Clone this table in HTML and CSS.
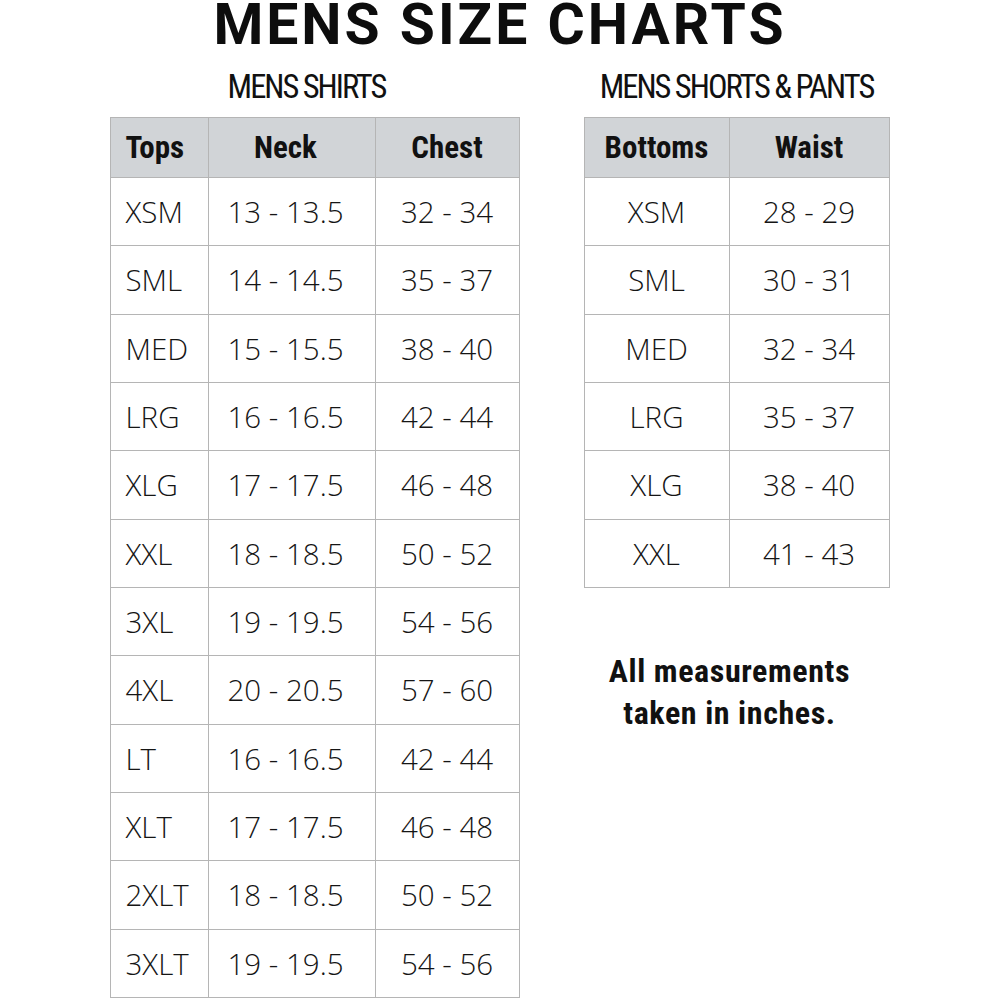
FILE: index.html
```html
<!DOCTYPE html>
<html>
<head>
<meta charset="utf-8">
<link rel="stylesheet" href="styles.css">
</head>
<body>
<div class="page">
  <h1 class="title">MENS SIZE CHARTS</h1>
  <div class="charts">
    <section class="chart chart-shirts">
      <h2 class="subtitle">MENS SHIRTS</h2>
      <table class="size-table shirts">
        <colgroup><col class="w-tops"><col class="w-neck"><col class="w-chest"></colgroup>
        <thead>
          <tr><th class="c-left">Tops</th><th class="c-neck">Neck</th><th>Chest</th></tr>
        </thead>
        <tbody>
          <tr><td class="c-left">XSM</td><td class="c-neck">13 - 13.5</td><td>32 - 34</td></tr>
          <tr><td class="c-left">SML</td><td class="c-neck">14 - 14.5</td><td>35 - 37</td></tr>
          <tr><td class="c-left">MED</td><td class="c-neck">15 - 15.5</td><td>38 - 40</td></tr>
          <tr><td class="c-left">LRG</td><td class="c-neck">16 - 16.5</td><td>42 - 44</td></tr>
          <tr><td class="c-left">XLG</td><td class="c-neck">17 - 17.5</td><td>46 - 48</td></tr>
          <tr><td class="c-left">XXL</td><td class="c-neck">18 - 18.5</td><td>50 - 52</td></tr>
          <tr><td class="c-left">3XL</td><td class="c-neck">19 - 19.5</td><td>54 - 56</td></tr>
          <tr><td class="c-left">4XL</td><td class="c-neck">20 - 20.5</td><td>57 - 60</td></tr>
          <tr><td class="c-left">LT</td><td class="c-neck">16 - 16.5</td><td>42 - 44</td></tr>
          <tr><td class="c-left">XLT</td><td class="c-neck">17 - 17.5</td><td>46 - 48</td></tr>
          <tr><td class="c-left">2XLT</td><td class="c-neck">18 - 18.5</td><td>50 - 52</td></tr>
          <tr><td class="c-left">3XLT</td><td class="c-neck">19 - 19.5</td><td>54 - 56</td></tr>
        </tbody>
      </table>
    </section>
    <section class="chart chart-bottoms">
      <h2 class="subtitle">MENS SHORTS &amp; PANTS</h2>
      <table class="size-table bottoms">
        <colgroup><col class="w-bottoms"><col class="w-waist"></colgroup>
        <thead>
          <tr><th>Bottoms</th><th>Waist</th></tr>
        </thead>
        <tbody>
          <tr><td>XSM</td><td>28 - 29</td></tr>
          <tr><td>SML</td><td>30 - 31</td></tr>
          <tr><td>MED</td><td>32 - 34</td></tr>
          <tr><td>LRG</td><td>35 - 37</td></tr>
          <tr><td>XLG</td><td>38 - 40</td></tr>
          <tr><td>XXL</td><td>41 - 43</td></tr>
        </tbody>
      </table>
      <p class="note">All measurements<br>taken in inches.</p>
    </section>
  </div>
</div>
</body>
</html>
```

FILE: styles.css
```css
html, body {
  margin: 0;
  padding: 0;
  background: #ffffff;
}

.page {
  width: 1000px;
  height: 1000px;
  overflow: hidden;
  color: #111111;
}

.title {
  margin: 0;
  height: 43px;
  padding-top: 3px;
  text-align: center;
  font-family: "Roboto", sans-serif;
  font-weight: bold;
  font-size: 57px;
  line-height: 43px;
  letter-spacing: 3px;
  color: #0d0d0d;
}

.charts {
  display: flex;
  gap: 65px;
  padding-left: 110px;
}

.chart {
  display: flex;
  flex-direction: column;
  align-items: center;
}

.chart-shirts { width: 409px; }
.chart-bottoms { width: 305px; }

.subtitle {
  margin: 0;
  height: 71px;
  padding-top: 21px;
  box-sizing: border-box;
  font-family: "Roboto", sans-serif;
  font-stretch: 75%;
  font-weight: 400;
  font-size: 32.5px;
  line-height: 40px;
  letter-spacing: -2px;
  white-space: nowrap;
  color: #111111;
}

.chart-shirts .subtitle { padding-right: 16px; }

.size-table {
  border-collapse: collapse;
  table-layout: fixed;
  font-family: "Open Sans", "Noto Sans", sans-serif;
  color: #151515;
}

.shirts { width: 409px; }
.bottoms { width: 305px; }

.w-tops { width: 98px; }
.w-neck { width: 167px; }
.w-chest { width: 144px; }
.w-bottoms { width: 145px; }
.w-waist { width: 160px; }

.size-table th,
.size-table td {
  border: 1px solid #b5b5b5;
  padding: 0;
  text-align: center;
  white-space: nowrap;
}

.size-table th {
  height: 59px;
  background: #d1d4d7;
  font-family: "Roboto", sans-serif;
  font-stretch: 75%;
  font-weight: bold;
  font-size: 31px;
  color: #111111;
}

.size-table td {
  height: 67.33px;
  font-size: 29.5px;
  font-weight: 350;
}

.shirts .c-left {
  text-align: left;
  padding-left: 15px;
}

.shirts .c-neck {
  padding-right: 12px;
}

.note {
  margin: 62px 0 0 0;
  padding-right: 14px;
  font-family: "Roboto", sans-serif;
  font-stretch: 75%;
  font-weight: bold;
  font-size: 32px;
  line-height: 42px;
  letter-spacing: 0.6px;
  text-align: center;
  color: #111111;
}
```
